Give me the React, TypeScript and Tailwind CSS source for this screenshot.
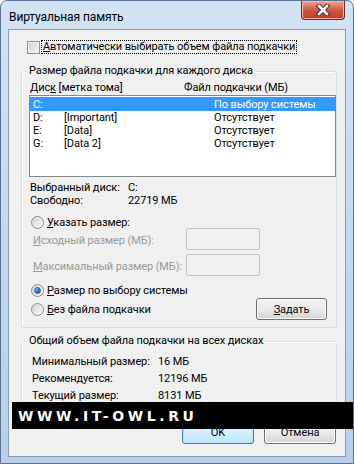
import React from "react";

type Drive = { letter: string; label: string; size: string };

const DRIVES: Drive[] = [
  { letter: "C:", label: "", size: "По выбору системы" },
  { letter: "D:", label: "[Important]", size: "Отсутствует" },
  { letter: "E:", label: "[Data]", size: "Отсутствует" },
  { letter: "G:", label: "[Data 2]", size: "Отсутствует" },
];

const TOTALS = [
  { label: "Минимальный размер:", value: "16 МБ" },
  { label: "Рекомендуется:", value: "12196 МБ" },
  { label: "Текущий размер:", value: "8131 МБ" },
];

function Radio({ checked }: { checked?: boolean }) {
  return (
    <span className="flex h-[13px] w-[13px] shrink-0 items-center justify-center rounded-full border border-[#8e8f8f] bg-gradient-to-br from-[#d6d6d6] to-[#f8f8f8]">
      {checked && (
        <span className="h-[7px] w-[7px] rounded-full border border-[#1d5a96] bg-gradient-to-br from-[#9fd3ff] via-[#2f85d6] to-[#0f4f99]" />
      )}
    </span>
  );
}

function GroupBox({
  title,
  className,
  children,
}: {
  title: string;
  className: string;
  children: React.ReactNode;
}) {
  return (
    <div
      className={`relative ml-[12px] w-[316px] rounded-[3px] border border-[#d5dfe5] shadow-[inset_1px_1px_0_#fff] ${className}`}
    >
      <span className="absolute -top-[9px] left-[5px] bg-[#f0f0f0] px-[2px] leading-[15px]">
        {title}
      </span>
      {children}
    </div>
  );
}

function Button({ children, primary }: { children: React.ReactNode; primary?: boolean }) {
  return (
    <div
      className={`flex h-[23px] w-[72px] items-center justify-center rounded-[3px] border ${
        primary
          ? "border-[#3c7fb1] bg-gradient-to-b from-[#eaf6fd] to-[#bee6fd] shadow-[inset_0_0_0_1px_#b9e3fb]"
          : "border-[#707070] bg-gradient-to-b from-[#f2f2f2] via-[#ebebeb] to-[#d5d5d5] shadow-[inset_0_0_0_1px_#fcfcfc]"
      }`}
    >
      {children}
    </div>
  );
}

export default function App() {
  return (
    <div className="relative h-[464px] w-[354px] overflow-hidden whitespace-nowrap rounded-t-[7px] border border-[#5b7090] bg-gradient-to-b from-[#d3e3f5] via-[#c4d8ef] to-[#b8d0ec] font-['Roboto',sans-serif] text-[11px] leading-none tracking-[-0.1px] text-black">
      {/* Title bar */}
      <div className="flex h-[28px] items-start justify-between">
        <span className="pl-[8px] pt-[9px] text-[12px] leading-[14px]">Виртуальная память</span>
        <div className="mr-[8px] flex h-[19px] w-[44px] items-center justify-center rounded-b-[4px] border border-t-0 border-[#6b2a1c] bg-gradient-to-b from-[#eaa99b] via-[#d0573f] to-[#c23a22] shadow-[inset_0_0_0_1px_#f0b8aa]">
          <svg width="14" height="12" viewBox="0 0 14 12">
            <path d="M3 2 L11 10 M11 2 L3 10" stroke="#4a2a24" strokeWidth="4.5" strokeLinecap="square" />
            <path d="M3 2 L11 10 M11 2 L3 10" stroke="#ffffff" strokeWidth="2.5" strokeLinecap="square" />
          </svg>
        </div>
      </div>

      {/* Client area */}
      <div className="mx-[7px] flex h-[428px] flex-col border border-[#8a9cb4] bg-[#f0f0f0]">
        <div className="ml-[18px] mt-[10px] flex h-[14px] items-center gap-[2px]">
          <span className="h-[13px] w-[13px] shrink-0 border border-[#8e8f8f] bg-gradient-to-br from-[#d2d2d2] to-[#f7f7f7] shadow-[inset_0_0_0_1px_#f4f4f4]" />
          <span className="px-[1px] leading-[12px] outline-1 outline-dotted outline-black">
            <span className="underline">А</span>втоматически выбирать объем файла подкачки
          </span>
        </div>

        <GroupBox title="Размер файла подкачки для каждого диска" className="mt-[17px] h-[257px]">
          <div className="mt-[8px] flex h-[14px] items-center pl-[8px]">
            <span className="w-[154px] shrink-0">
              Дис<span className="underline">к</span> [метка тома]
            </span>
            <span>Файл подкачки (МБ)</span>
          </div>
          <div className="ml-[7px] mt-[1px] h-[82px] w-[307px] border border-[#828790] bg-white pt-[1px]">
            {DRIVES.map((d, i) => (
              <div
                key={d.letter}
                className={`flex items-center pl-[3px] ${
                  i === 0 ? "h-[14px] bg-[#3399ff] text-white" : "h-[13px]"
                }`}
              >
                <span className="w-[31px] shrink-0">{d.letter}</span>
                <span className="w-[150px] shrink-0">{d.label}</span>
                <span>{d.size}</span>
              </div>
            ))}
          </div>

          <div className="mt-[4px] flex h-[13px] items-center pl-[8px]">
            <span className="w-[98px] shrink-0">Выбранный диск:</span>
            <span>C:</span>
          </div>
          <div className="flex h-[13px] items-center pl-[8px]">
            <span className="w-[98px] shrink-0">Свободно:</span>
            <span>22719 МБ</span>
          </div>

          <div className="mt-[9px] flex h-[12px] items-center gap-[3px] pl-[9px]">
            <Radio />
            <span>
              <span className="underline">У</span>казать размер:
            </span>
          </div>
          <div className="flex h-[22px] items-center pl-[11px] text-[#999999]">
            <span className="mt-[2px] w-[153px] shrink-0">
              <span className="underline">И</span>сходный размер (МБ):
            </span>
            <span className="h-[22px] w-[74px] rounded-[2px] border border-[#c4c4c4] bg-[#f0f0f0]" />
          </div>
          <div className="mt-[4px] flex h-[22px] items-center pl-[11px] text-[#999999]">
            <span className="mt-[2px] w-[153px] shrink-0">
              <span className="underline">М</span>аксимальный размер (МБ):
            </span>
            <span className="h-[22px] w-[74px] rounded-[2px] border border-[#c4c4c4] bg-[#f0f0f0]" />
          </div>

          <div className="mt-[8px] flex h-[12px] items-center gap-[3px] pl-[9px]">
            <Radio checked />
            <span>
              <span className="underline">Р</span>азмер по выбору системы
            </span>
          </div>
          <div className="mt-[2px] flex h-[22px] items-center justify-between pl-[9px] pr-[9px]">
            <div className="flex items-center gap-[3px]">
              <Radio />
              <span>
                <span className="underline">Б</span>ез файла подкачки
              </span>
            </div>
            <div className="flex h-[22px] w-[71px] items-center justify-center rounded-[3px] border border-[#707070] bg-gradient-to-b from-[#f2f2f2] via-[#ebebeb] to-[#d5d5d5] shadow-[inset_0_0_0_1px_#fcfcfc]">
              <span className="underline">З</span>адать
            </div>
          </div>
        </GroupBox>

        <GroupBox title="Общий объем файла подкачки на всех дисках" className="mt-[13px] h-[72px]">
          <div className="mt-[11px]">
            {TOTALS.map((t) => (
              <div key={t.label} className="flex h-[17px] items-center pl-[10px]">
                <span className="w-[126px] shrink-0">{t.label}</span>
                <span>{t.value}</span>
              </div>
            ))}
          </div>
        </GroupBox>

        <div className="mt-[8px] flex justify-end gap-[10px] pr-[9px]">
          <Button primary>OK</Button>
          <Button>Отмена</Button>
        </div>
      </div>

      {/* Watermark */}
      <div className="absolute left-[11px] right-0 top-[401px] flex h-[27px] items-center bg-black pl-[6px]">
        <span className="font-['DejaVu_Sans',sans-serif] text-[14px] font-bold tracking-[3.6px] text-white">
          WWW.IT-OWL.RU
        </span>
      </div>
    </div>
  );
}
